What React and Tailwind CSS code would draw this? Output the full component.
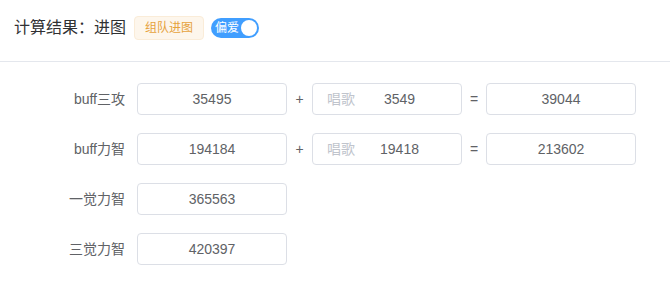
import React from "react";

const font = { fontFamily: '"Liberation Sans", "Noto Sans CJK SC", sans-serif' };

function Box({ value, prefix }) {
  return (
    <div className="relative w-[150px] h-[32px] border border-[#dcdfe6] rounded-[4px] bg-white flex items-center">
      {prefix ? (
        <>
          <span className="absolute left-[14px] text-[14px] text-[#c0c4cc]">{prefix}</span>
          <div className="flex-1 text-center pl-[40px] pr-[15px] text-[14px] text-[#606266]">{value}</div>
        </>
      ) : (
        <div className="flex-1 text-center text-[14px] text-[#606266]">{value}</div>
      )}
    </div>
  );
}

function Row({ label, children }) {
  return (
    <div className="flex items-center h-[32px]">
      <div className="w-[137px] pr-[12px] text-right text-[14px] text-[#606266]">{label}</div>
      {children}
    </div>
  );
}

export default function App() {
  return (
    <div className="w-[670px] h-[301px] bg-white" style={font}>
      <div className="flex items-center pl-[14px] pt-[16px] pb-[21px] border-b border-[#e4e7ed]">
        <span className="text-[16px] leading-[24px] text-[#303133]">计算结果：进图</span>
        <span className="ml-[8px] h-[24px] px-[10px] flex items-center text-[12px] text-[#e6a23c] bg-[#fdf6ec] border border-[#faecd8] rounded-[4px]">
          组队进图
        </span>
        <span className="ml-[7px] relative w-[48px] h-[20px] rounded-full bg-[#409eff] flex items-center">
          <span className="pl-[4px] text-[12px] text-white leading-none">偏爱</span>
          <span className="absolute right-[2px] top-[2px] w-[16px] h-[16px] rounded-full bg-white"></span>
        </span>
      </div>
      <div className="pt-[21px] flex flex-col gap-[18px]">
        <Row label="buff三攻">
          <Box value="35495" />
          <span className="w-[25px] text-center text-[14px] text-[#606266]">+</span>
          <Box prefix="唱歌" value="3549" />
          <span className="w-[24px] text-center text-[14px] text-[#606266]">=</span>
          <Box value="39044" />
        </Row>
        <Row label="buff力智">
          <Box value="194184" />
          <span className="w-[25px] text-center text-[14px] text-[#606266]">+</span>
          <Box prefix="唱歌" value="19418" />
          <span className="w-[24px] text-center text-[14px] text-[#606266]">=</span>
          <Box value="213602" />
        </Row>
        <Row label="一觉力智">
          <Box value="365563" />
        </Row>
        <Row label="三觉力智">
          <Box value="420397" />
        </Row>
      </div>
    </div>
  );
}
